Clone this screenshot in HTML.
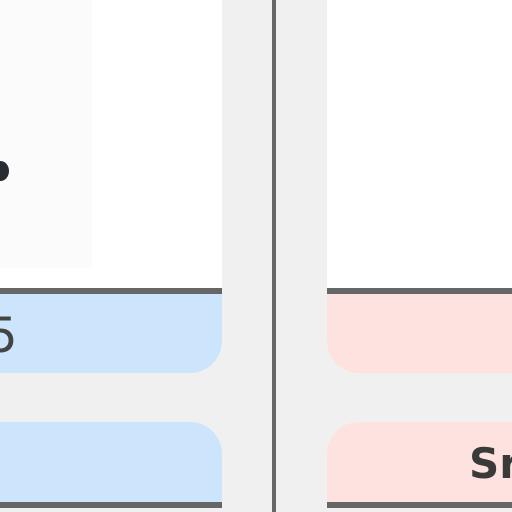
<!DOCTYPE html>
<html><head><style>
html,body{margin:0;padding:0;width:512px;height:512px;overflow:hidden;background:#f0f0f0;font-family:"DejaVu Sans","Liberation Sans",sans-serif;}
div{position:absolute;box-sizing:border-box;}
</style></head><body>
<div style="left:0;top:0;width:222px;height:288px;background:#fff"></div>
<div style="left:0;top:0;width:92px;height:268px;background:#fbfbfb"></div>
<div style="left:-8px;top:161px;width:17px;height:20px;border-radius:50%;background:#2a2c33"></div>
<div style="left:0;top:288px;width:222px;height:6px;background:#666"></div>
<div style="left:0;top:294px;width:222px;height:79px;background:#cce5fd;border-bottom-right-radius:32px"></div>
<div style="left:-13px;top:308px;font-size:48px;color:#444;line-height:56px">5</div>
<div style="left:0;top:422px;width:222px;height:80px;background:#cce5fd;border-top-right-radius:32px"></div>
<div style="left:0;top:502px;width:222px;height:6px;background:#666"></div>
<div style="left:272px;top:0;width:4px;height:512px;background:#666"></div>
<div style="left:327px;top:0;width:185px;height:288px;background:#fff"></div>
<div style="left:327px;top:288px;width:185px;height:6px;background:#666"></div>
<div style="left:327px;top:294px;width:185px;height:79px;background:#fde2df;border-bottom-left-radius:32px"></div>
<div style="left:327px;top:422px;width:185px;height:80px;background:#fde2df;border-top-left-radius:32px"></div>
<div style="left:469px;top:438px;font-size:42px;font-weight:bold;color:#3a3a3a;line-height:52px;white-space:nowrap">Sr</div>
<div style="left:327px;top:502px;width:185px;height:6px;background:#666"></div>
</body></html>
